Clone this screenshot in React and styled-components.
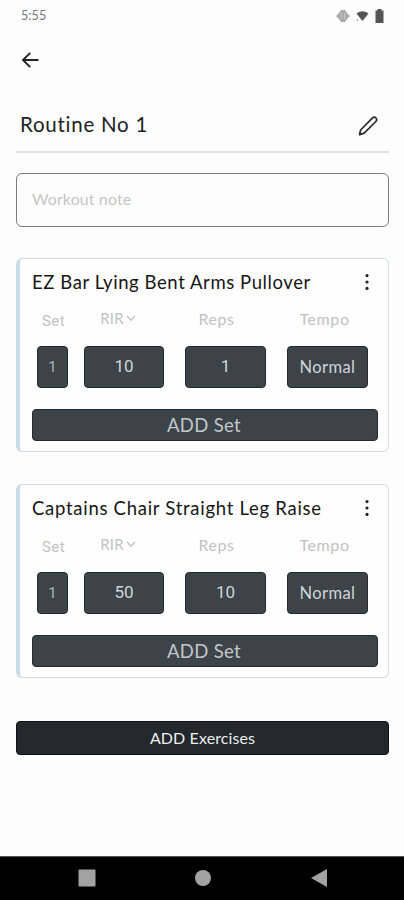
import React from "react";
import styled, { createGlobalStyle } from "styled-components";

const GlobalStyle = createGlobalStyle`
  * { box-sizing: border-box; }
  body { margin: 0; background: #fdfdfd; font-family: Lato, "Noto Sans", sans-serif; }
  button, input { font-family: inherit; }
`;

const Screen = styled.div`
  width: 404px;
  height: 900px;
  display: flex;
  flex-direction: column;
  background: #fdfdfd;
  overflow: hidden;
`;

const StatusBar = styled.header`
  height: 32px;
  padding: 0 20px 0 21px;
  display: flex;
  align-items: center;
  justify-content: space-between;
`;

const Clock = styled.span`
  font-size: 12.5px;
  line-height: 16px;
  letter-spacing: 0.1px;
  color: #777;
`;

const StatusIcons = styled.div`
  display: flex;
  align-items: center;
  gap: 6px;
  svg { display: block; }
`;

const Content = styled.main`
  flex: 1;
  padding: 0 15px 0 16px;
  display: flex;
  flex-direction: column;
`;

const IconButton = styled.button`
  border: 0;
  padding: 0;
  background: none;
  display: flex;
  svg { display: block; }
`;

const NavRow = styled.nav`
  height: 56px;
  padding-left: 5px;
  display: flex;
  align-items: center;
`;

const TitleRow = styled.div`
  height: 65px;
  padding: 12px 11px 0 4px;
  display: flex;
  align-items: center;
  justify-content: space-between;
  border-bottom: 2px solid #dfdfdf;
`;

const Title = styled.h1`
  margin: 0;
  padding-bottom: 4px;
  font-size: 20.5px;
  font-weight: 400;
  line-height: 26px;
  letter-spacing: 0.75px;
  color: #222;
`;

const NoteInput = styled.input`
  width: 100%;
  height: 54px;
  margin: 20px 0 31px;
  padding: 0 15px 4px;
  border: 1px solid #7b7b7b;
  border-radius: 6px;
  background: #fdfdfd;
  font-size: 16px;
  letter-spacing: 0.1px;
  outline: none;
  &::placeholder { color: #c6c6c6; opacity: 1; }
`;

const Card = styled.section`
  height: 194px;
  margin-bottom: 32px;
  padding: 0 10px 0 11px;
  border: 1px solid #d6dadd;
  border-left: 4px solid #cbdce9;
  border-radius: 6px;
  background: #fefefe;
  display: flex;
  flex-direction: column;
`;

const CardHeader = styled.div`
  height: 46px;
  padding-right: 8px;
  display: flex;
  align-items: center;
  justify-content: space-between;
`;

const ExerciseName = styled.h2`
  margin: 0;
  padding: 0 0 1px 1px;
  font-size: 18.5px;
  font-weight: 400;
  line-height: 24px;
  letter-spacing: ${(p) => p.$tracking}px;
  white-space: nowrap;
  color: #161616;
`;

const SetGrid = styled.div`
  display: grid;
  grid-template-columns: 31px 80px 81px 81px;
  column-gap: 16px;
  padding-left: 6px;
  & > :nth-child(4n + 3) { margin-left: 5px; width: 81px; }
  & > :nth-child(4n) { margin-left: 10px; width: 81px; }
`;

const ColumnLabel = styled.div`
  height: 41px;
  padding-top: ${(p) => p.$drop}px;
  display: flex;
  justify-content: center;
  gap: 2px;
  font-family: ${(p) => (p.$condensed ? "Roboto" : "Lato")}, sans-serif;
  font-size: ${(p) => p.$size}px;
  line-height: 18px;
  letter-spacing: ${(p) => p.$tracking}px;
  color: #c2c2c2;
  transform: translateX(${(p) => p.$shift || 0}px);
  svg { display: block; margin-top: 5px; }
`;

const ValueCell = styled.button`
  height: 42px;
  padding: ${(p) => p.$pad};
  border: 1px solid #202b34;
  border-radius: 4px;
  background: #3c444a;
  color: ${(p) => p.$color || "#d2d4d5"};
  font-family: ${(p) => (p.$text ? "Lato" : "Roboto")}, sans-serif;
  font-size: ${(p) => p.$size}px;
  letter-spacing: ${(p) => p.$tracking}px;
  line-height: 20px;
`;

const AddSetButton = styled.button`
  height: 32px;
  margin: 20.5px 0 0 1px;
  padding: 0 2px 0 0;
  border: 1px solid #202b34;
  border-radius: 4px;
  background: #3c444a;
  color: #c3c7c9;
  font-size: 18.5px;
  line-height: 24px;
  letter-spacing: 0.35px;
`;

const AddExercisesButton = styled.button`
  height: 34px;
  margin-top: 11px;
  padding: 0 0 2px;
  border: 1px solid #0d1216;
  border-radius: 4px;
  background: #22282c;
  color: #eeefef;
  font-size: 16px;
  letter-spacing: 0.1px;
`;

const SystemBar = styled.footer`
  height: 44px;
  padding-left: 1px;
  display: flex;
  justify-content: center;
  align-items: center;
  gap: 98px;
  background: #000;
  border-top: 1px solid #555;
  svg { display: block; margin-top: -1px; }
`;

const BackIcon = () => (
  <svg width="18" height="18" viewBox="0 0 18 18" fill="none" stroke="#222" strokeWidth="1.9">
    <path d="M17.500 9H2M9.200 1.800L2 9L9.200 16.200" />
  </svg>
);

const PencilIcon = () => (
  <svg width="20" height="21" viewBox="0 0 20 21" fill="none" stroke="#292929" strokeWidth="1.7" strokeLinejoin="round">
    <path d="M1.600 19.700L2.600 15L14.300 3.100Q16.200 1.300 17.900 3Q19.500 4.700 17.800 6.500L6.200 18.100Z" />
    <path d="M1.600 19.700L2.100 17.200L3.900 19Z" fill="#292929" strokeWidth=".6" />
  </svg>
);

const MoreIcon = () => (
  <svg width="6" height="18" viewBox="0 0 6 18" fill="#222">
    <circle cx="3" cy="2.6" r="1.6" />
    <circle cx="3" cy="9" r="1.6" />
    <circle cx="3" cy="15.4" r="1.6" />
  </svg>
);

const ChevronIcon = () => (
  <svg width="10" height="9" viewBox="0 0 10 9" fill="none" stroke="#c2c2c2" strokeWidth="1.3">
    <path d="M1 2L5 6.3L9 2" />
  </svg>
);

const VibrateIcon = () => (
  <svg width="14" height="14" viewBox="0 0 14 14" fill="#aaa">
    <path d="M5 1h4l2 3 3 3-3 3-2 3h-4L3 10 0 7l3-3z" />
    <path d="M5.500 4v6M8.500 4v6" stroke="#c6c6c6" strokeWidth="1" />
  </svg>
);

const WifiIcon = () => (
  <svg width="13" height="12" viewBox="0 0 13 12" fill="#555">
    <path d="M.5 3.500Q6.500-1 12.500 3.500L7 10.500H6z" />
    <circle cx="1.500" cy="10" r=".8" fill="#888" />
  </svg>
);

const BatteryIcon = () => (
  <svg width="9" height="14" viewBox="0 0 9 14" fill="#555">
    <path d="M2.500 0h4v1.500H8.500V14H.5V1.500h2z" />
  </svg>
);

const exercises = [
  { name: "EZ Bar Lying Bent Arms Pullover", tracking: 0.58, set: 1, rir: 10, reps: 1, tempo: "Normal" },
  { name: "Captains Chair Straight Leg Raise", tracking: 0.72, set: 1, rir: 50, reps: 10, tempo: "Normal" },
];

function ExerciseCard({ exercise }) {
  return (
    <Card>
      <CardHeader>
        <ExerciseName $tracking={exercise.tracking}>{exercise.name}</ExerciseName>
        <IconButton aria-label="More options"><MoreIcon /></IconButton>
      </CardHeader>
      <SetGrid>
        <ColumnLabel $condensed $size={15} $tracking={0.4} $drop={7} $shift={1}>Set</ColumnLabel>
        <ColumnLabel $size={15} $tracking={0.1} $drop={4} $shift={-6}>RIR<ChevronIcon /></ColumnLabel>
        <ColumnLabel $size={16} $tracking={0.6} $drop={5} $shift={-9}>Reps</ColumnLabel>
        <ColumnLabel $size={16} $tracking={0.6} $drop={5} $shift={-3}>Tempo</ColumnLabel>
        <ValueCell $size={15} $pad="0" $tracking={0} $color="#aeb3b6">{exercise.set}</ValueCell>
        <ValueCell $size={17} $pad="0 0 2px" $tracking={0}>{exercise.rir}</ValueCell>
        <ValueCell $size={17} $pad="0 0 2px" $tracking={0}>{exercise.reps}</ValueCell>
        <ValueCell $text $size={16.5} $pad="0" $tracking={0.4}>{exercise.tempo}</ValueCell>
      </SetGrid>
      <AddSetButton>ADD Set</AddSetButton>
    </Card>
  );
}

export default function App() {
  return (
    <Screen>
      <GlobalStyle />
      <StatusBar>
        <Clock>5:55</Clock>
        <StatusIcons><VibrateIcon /><WifiIcon /><BatteryIcon /></StatusIcons>
      </StatusBar>
      <Content>
        <NavRow>
          <IconButton aria-label="Back"><BackIcon /></IconButton>
        </NavRow>
        <TitleRow>
          <Title>Routine No 1</Title>
          <IconButton aria-label="Edit routine"><PencilIcon /></IconButton>
        </TitleRow>
        <NoteInput placeholder="Workout note" />
        {exercises.map((exercise) => (
          <ExerciseCard key={exercise.name} exercise={exercise} />
        ))}
        <AddExercisesButton>ADD Exercises</AddExercisesButton>
      </Content>
      <SystemBar>
        <svg width="18" height="18" viewBox="0 0 18 18"><rect x=".5" y=".5" width="17" height="17" rx="1" fill="#a2a2a2" /></svg>
        <svg width="18" height="18" viewBox="0 0 18 18"><circle cx="9" cy="9" r="8" fill="#a2a2a2" /></svg>
        <svg width="18" height="18" viewBox="0 0 18 18"><path d="M1 9L17 0V18Z" fill="#a2a2a2" /></svg>
      </SystemBar>
    </Screen>
  );
}
